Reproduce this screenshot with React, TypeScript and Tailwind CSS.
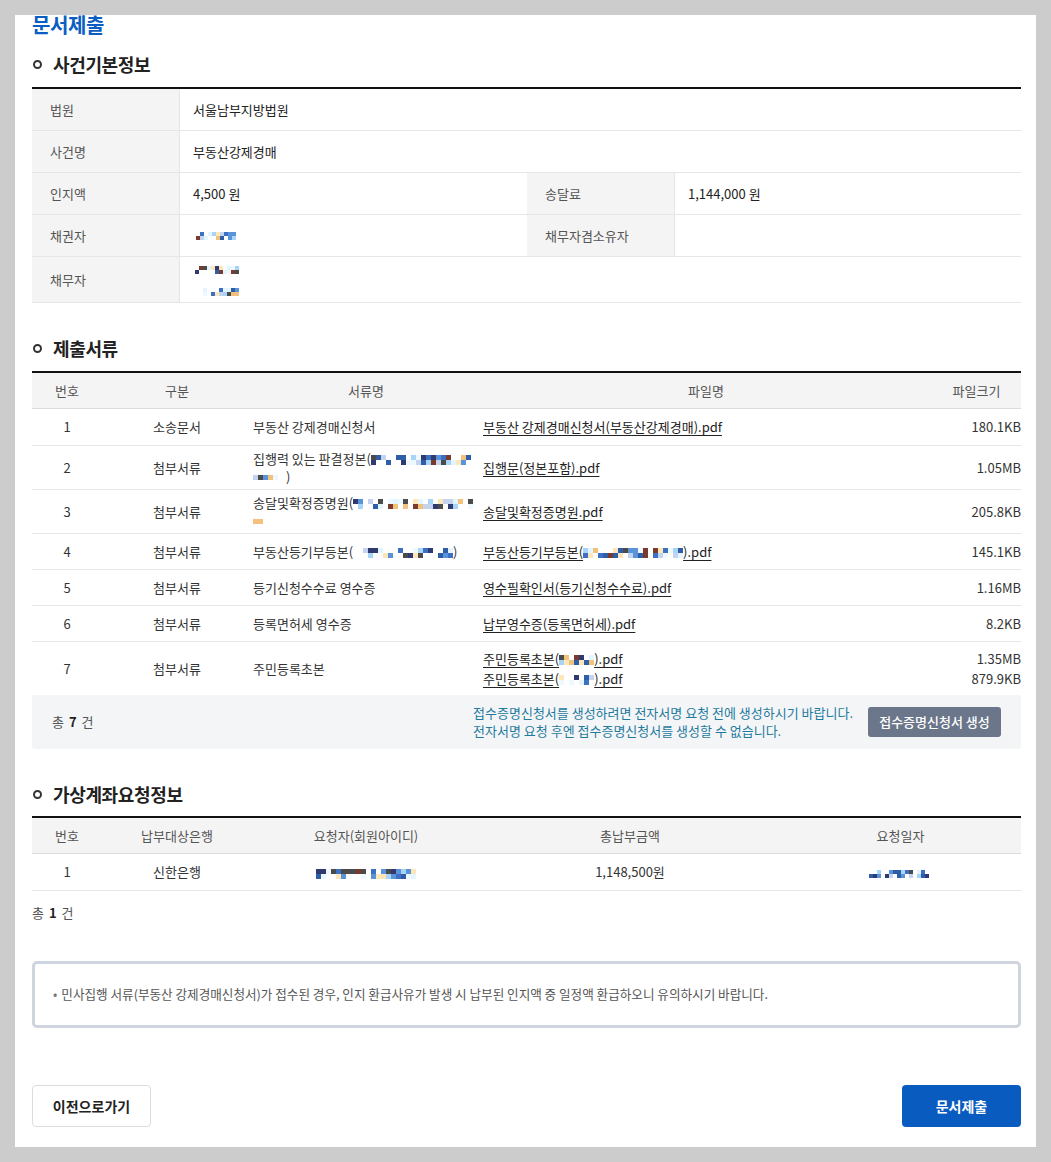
import React from "react";

const PAL = ["#a8d5f7", "#e3f5ff", "#2e3a70", "#3c70c4", "#f2c27c", "#7a3a2c", "#4b4b4b", "#c4d4f0", "#fde6b8", "#5b93db", "#eef8ff", "#2f5ea8"];

function rng(seed: number) {
  let s = seed * 7919 + 13;
  return () => {
    s = (s * 9301 + 49297) % 233280;
    return s / 233280;
  };
}

function Mosaic({ w, rows = 2, cell = 5, seed = 1, density = 0.7 }: { w: number; rows?: number; cell?: number; seed?: number; density?: number }) {
  const cols = Math.max(1, Math.round(w / cell));
  const r = rng(seed);
  const cells: string[] = [];
  for (let i = 0; i < cols * rows; i++) {
    const v = r();
    cells.push(v < density ? PAL[Math.floor(r() * PAL.length)] : "transparent");
  }
  return (
    <span
      className="inline-grid align-middle"
      style={{ gridTemplateColumns: `repeat(${cols}, ${cell}px)`, gridAutoRows: `${cell}px` }}
    >
      {cells.map((c, i) => (
        <span key={i} style={{ background: c }} />
      ))}
    </span>
  );
}

function Heading({ children }: { children: React.ReactNode }) {
  return (
    <div className="flex h-[24px] items-center">
      <span className="ml-[1px] box-border h-[9px] w-[9px] rounded-full border-2 border-[#333]" />
      <span className="ml-[11px] text-[18px] font-bold tracking-[-0.02em] text-[#222]">{children}</span>
    </div>
  );
}

const lab = "flex items-center bg-[#f4f4f4] border-r border-[#e5e5e5] pl-[18px] text-[#555]";
const val = "flex items-center pl-[13px] text-[#222]";

const docCols = "grid grid-cols-[70px_150px_228px_452px_89px]";

function DocRow({ no, cat, name, files, sizes, h }: { no: string; cat: string; name: React.ReactNode; files: React.ReactNode[]; sizes: string[]; h: string }) {
  return (
    <div className={`${docCols} ${h} items-center border-b border-[#e6e6e6] text-[#333]`}>
      <div className="text-center">{no}</div>
      <div className="text-center">{cat}</div>
      <div className="pl-[1px] leading-[18px]">{name}</div>
      <div className="flex flex-col pl-[3px] leading-[20px]">
        {files.map((f, i) => (
          <span key={i} className="text-[#222] underline underline-offset-[3px] decoration-[#222]">
            {f}
          </span>
        ))}
      </div>
      <div className="flex flex-col items-end leading-[20px]">
        {sizes.map((s, i) => (
          <span key={i}>{s}</span>
        ))}
      </div>
    </div>
  );
}

export default function App() {
  return (
    <div className="min-h-screen bg-[#cccccc] p-[15px] font-['Noto_Sans_CJK_KR','Noto_Sans',sans-serif] text-[13px]">
      <div className="bg-white pl-[17px] pr-[15px] pb-[20px]">
        <h1 className="text-[20px] font-bold leading-[20px] tracking-[-0.02em] text-[#0a5ec2]">문서제출</h1>

        {/* 사건기본정보 */}
        <div className="mt-[17px]">
          <Heading>사건기본정보</Heading>
        </div>
        <div className="mt-[11px] border-t-2 border-[#111]">
          <div className="grid h-[42px] grid-cols-[148px_347px_148px_346px] border-b border-[#e6e6e6]">
            <div className={lab}>법원</div>
            <div className={`${val} col-span-3`}>서울남부지방법원</div>
          </div>
          <div className="grid h-[42px] grid-cols-[148px_347px_148px_346px] border-b border-[#e6e6e6]">
            <div className={lab}>사건명</div>
            <div className={`${val} col-span-3`}>부동산강제경매</div>
          </div>
          <div className="grid h-[42px] grid-cols-[148px_347px_148px_346px] border-b border-[#e6e6e6]">
            <div className={lab}>인지액</div>
            <div className={val}>4,500 원</div>
            <div className={lab}>송달료</div>
            <div className={`${val} pl-[12px]`}>1,144,000 원</div>
          </div>
          <div className="grid h-[42px] grid-cols-[148px_347px_148px_346px] border-b border-[#e6e6e6]">
            <div className={lab}>채권자</div>
            <div className="pl-[16px] pt-[10px]">
              <Mosaic w={40} seed={3} cell={4} density={0.75} />
            </div>
            <div className={lab}>채무자겸소유자</div>
            <div />
          </div>
          <div className="grid h-[46px] grid-cols-[148px_347px_148px_346px] border-b border-[#e6e6e6]">
            <div className={lab}>채무자</div>
            <div className="col-span-3 flex flex-col gap-[9px] pl-[15px] pt-[5px]">
              <div className="leading-none">
                <Mosaic w={44} seed={7} cell={4} density={0.65} />
              </div>
              <div className="leading-none">
                <Mosaic w={44} seed={11} cell={4} density={0.75} />
              </div>
            </div>
          </div>
        </div>

        {/* 제출서류 */}
        <div className="mt-[33px]">
          <Heading>제출서류</Heading>
        </div>
        <div className="mt-[11px] border-t-2 border-[#111]">
          <div className={`${docCols} h-[36px] items-center border-b border-[#dcdcdc] bg-[#f4f4f4] text-[#555]`}>
            <div className="text-center">번호</div>
            <div className="text-center">구분</div>
            <div className="text-center">서류명</div>
            <div className="text-center">파일명</div>
            <div className="text-center">파일크기</div>
          </div>
          <DocRow h="h-[37px]" no="1" cat="소송문서" name="부동산 강제경매신청서" files={["부동산 강제경매신청서(부동산강제경매).pdf"]} sizes={["180.1KB"]} />
          <DocRow
            h="h-[44px]"
            no="2"
            cat="첨부서류"
            name={
              <>
                <div className="whitespace-nowrap">
                  집행력 있는 판결정본(
                  <Mosaic w={100} seed={21} cell={5} density={0.7} />
                </div>
                <div>
                  <Mosaic w={28} rows={1} seed={23} cell={5} density={0.85} /> )
                </div>
              </>
            }
            files={["집행문(정본포함).pdf"]}
            sizes={["1.05MB"]}
          />
          <DocRow
            h="h-[44px]"
            no="3"
            cat="첨부서류"
            name={
              <>
                <div className="whitespace-nowrap">
                  송달및확정증명원(
                  <Mosaic w={120} seed={31} cell={5} density={0.7} />
                </div>
                <div>
                  <Mosaic w={10} rows={1} seed={33} cell={5} density={1} />
                </div>
              </>
            }
            files={["송달및확정증명원.pdf"]}
            sizes={["205.8KB"]}
          />
          <DocRow
            h="h-[36px]"
            no="4"
            cat="첨부서류"
            name={
              <span className="whitespace-nowrap">
                부동산등기부등본(
                <Mosaic w={100} seed={41} cell={5} density={0.6} />)
              </span>
            }
            files={[
              <span className="whitespace-nowrap">
                부동산등기부등본(
                <Mosaic w={100} seed={43} cell={5} density={0.75} />
                ).pdf
              </span>,
            ]}
            sizes={["145.1KB"]}
          />
          <DocRow h="h-[36px]" no="5" cat="첨부서류" name="등기신청수수료 영수증" files={["영수필확인서(등기신청수수료).pdf"]} sizes={["1.16MB"]} />
          <DocRow h="h-[36px]" no="6" cat="첨부서류" name="등록면허세 영수증" files={["납부영수증(등록면허세).pdf"]} sizes={["8.2KB"]} />
          <div className={`${docCols} h-[53px] items-center text-[#333]`}>
            <div className="text-center">7</div>
            <div className="text-center">첨부서류</div>
            <div className="pl-[1px]">주민등록초본</div>
            <div className="flex flex-col pl-[3px] leading-[20px]">
              <span className="text-[#222] underline underline-offset-[3px]">
                주민등록초본(
                <Mosaic w={36} seed={51} cell={5} density={0.7} />
                ).pdf
              </span>
              <span className="text-[#222] underline underline-offset-[3px]">
                주민등록초본(
                <Mosaic w={36} seed={53} cell={5} density={0.7} />
                ).pdf
              </span>
            </div>
            <div className="flex flex-col items-end leading-[20px]">
              <span>1.35MB</span>
              <span>879.9KB</span>
            </div>
          </div>
          <div className="flex h-[54px] items-center justify-between rounded-[3px] bg-[#f4f5f7] pl-[20px] pr-[20px]">
            <div className="text-[#555]">
              총 <b className="px-[2px] font-bold text-[#222]">7</b> 건
            </div>
            <div className="flex items-center gap-[15px]">
              <div className="leading-[18px] text-[#1f7b9e]">
                <div>접수증명신청서를 생성하려면 전자서명 요청 전에 생성하시기 바랍니다.</div>
                <div>전자서명 요청 후엔 접수증명신청서를 생성할 수 없습니다.</div>
              </div>
              <button className="h-[30px] w-[133px] rounded-[3px] bg-[#6b768a] text-[13px] font-medium text-white">
                접수증명신청서 생성
              </button>
            </div>
          </div>
        </div>

        {/* 가상계좌요청정보 */}
        <div className="mt-[33px]">
          <Heading>가상계좌요청정보</Heading>
        </div>
        <div className="mt-[10px] border-t-2 border-[#111]">
          <div className="grid h-[36px] grid-cols-[70px_150px_228px_300px_241px] items-center border-b border-[#dcdcdc] bg-[#f4f4f4] text-center text-[#555]">
            <div>번호</div>
            <div>납부대상은행</div>
            <div>요청자(회원아이디)</div>
            <div>총납부금액</div>
            <div>요청일자</div>
          </div>
          <div className="grid h-[37px] grid-cols-[70px_150px_228px_300px_241px] items-center border-b border-[#e6e6e6] text-center text-[#333]">
            <div>1</div>
            <div>신한은행</div>
            <div className="leading-none">
              <Mosaic w={100} seed={61} cell={5} density={0.7} />
            </div>
            <div>1,148,500원</div>
            <div className="leading-none">
              <Mosaic w={64} rows={2} seed={71} cell={4} density={0.65} />
            </div>
          </div>
        </div>
        <div className="mt-[12px] leading-[20px] text-[#555]">
          총 <b className="px-[2px] font-bold text-[#222]">1</b> 건
        </div>

        <div className="mt-[38px] flex h-[67px] items-center rounded-[5px] border-[3px] border-[#cfd5df] pl-[18px] text-[12.6px] text-[#555]">
          <span className="mr-[4px] text-[#777]">•</span>
          민사집행 서류(부동산 강제경매신청서)가 접수된 경우, 인지 환급사유가 발생 시 납부된 인지액 중 일정액 환급하오니 유의하시기 바랍니다.
        </div>

        <div className="mt-[57px] flex justify-between">
          <button className="h-[42px] w-[119px] rounded-[4px] border border-[#dcdcdc] bg-white text-[14px] font-bold text-[#222]">
            이전으로가기
          </button>
          <button className="h-[42px] w-[119px] rounded-[4px] bg-[#0a5bbf] text-[14px] font-bold text-white">
            문서제출
          </button>
        </div>
      </div>
    </div>
  );
}
